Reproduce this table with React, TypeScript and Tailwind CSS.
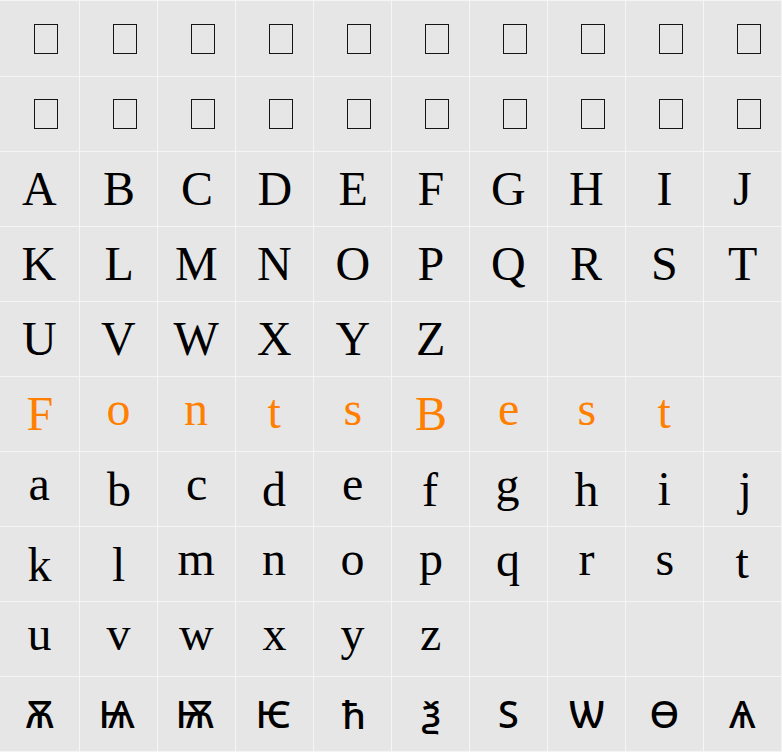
import React, { useMemo } from 'react';

type Kind = 'tofu' | 'latin' | 'orange' | 'old' | 'empty';
interface Cell { ch: string; kind: Kind }

const LATIN_FONT = '"Liberation Serif"';
const OLD_FONT = '500 38px "Noto Sans"';

// the specimen centres each glyph between its ink top and its baseline (descenders hang below)
let ctx: CanvasRenderingContext2D | null = null;
const measure = (ch: string, font: string, size: number) => {
  if (typeof document === 'undefined') return { dx: 0, dy: 0 };
  if (!ctx) ctx = document.createElement('canvas').getContext('2d');
  if (!ctx) return { dx: 0, dy: 0 };
  ctx.font = `${font}, serif`;
  const m = ctx.measureText(ch);
  const A = m.fontBoundingBoxAscent ?? size * 0.891;
  const D = m.fontBoundingBoxDescent ?? size * 0.216;
  const a = m.actualBoundingBoxAscent;
  const dy = a / 2 - (A - D) / 2;
  const dx = m.width / 2 - (m.actualBoundingBoxRight - m.actualBoundingBoxLeft) / 2;
  return { dx, dy };
};

const row = (s: string, kind: Kind): Cell[] => {
  const cells: Cell[] = Array.from(s).map(ch => ({ ch, kind }));
  while (cells.length < 10) cells.push({ ch: '', kind: 'empty' });
  return cells;
};

const cells: Cell[] = [
  ...Array.from({ length: 20 }, () => ({ ch: '', kind: 'tofu' as Kind })),
  ...row('ABCDEFGHIJ', 'latin'),
  ...row('KLMNOPQRST', 'latin'),
  ...row('UVWXYZ', 'latin'),
  ...row('FontsBest', 'orange'),
  ...row('abcdefghij', 'latin'),
  ...row('klmnopqrst', 'latin'),
  ...row('uvwxyz', 'latin'),
  ...row('ѪѨѬѤћѯЅѠѲѦ', 'old'),
];

const Glyph: React.FC<{ cell: Cell }> = ({ cell }) => {
  const isOld = cell.kind === 'old';
  const off = useMemo(
    () => (isOld ? measure(cell.ch, OLD_FONT, 38) : measure(cell.ch, `48px ${LATIN_FONT}`, 48)),
    [cell.ch, isOld]
  );

  if (cell.kind === 'empty') return null;
  if (cell.kind === 'tofu') {
    return <span className="block w-[24px] h-[30px] ml-[12px] border border-[#151515]" />;
  }

  const cls = isOld
    ? "block leading-none text-[38px] font-medium font-['Noto_Sans',sans-serif] text-black"
    : cell.kind === 'orange'
      ? "block leading-none text-[48px] font-['Liberation_Serif',serif] text-[#ff8000]"
      : "block leading-none text-[48px] font-['Liberation_Serif',serif] text-black";

  return (
    <span className={cls} style={{ transform: `translate(${off.dx}px, ${off.dy}px)` }}>
      {cell.ch}
    </span>
  );
};

const App: React.FC = () => {
  return (
    <div className="w-[782px] h-[752px] bg-[#f5f5f5] pt-px grid grid-cols-[79px_repeat(9,77px)] grid-rows-[75px_repeat(9,74px)] gap-px">
      {cells.map((cell, i) => (
        <div key={i} className="bg-[#e6e6e6] flex items-center justify-center overflow-hidden">
          <Glyph cell={cell} />
        </div>
      ))}
    </div>
  );
};

export default App;
